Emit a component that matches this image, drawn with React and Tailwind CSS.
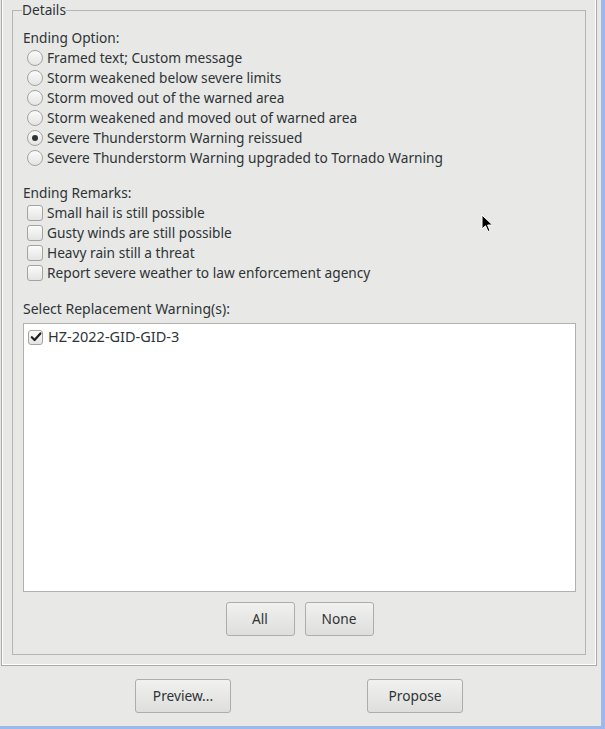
import React from 'react';

const endingOptions = [
  'Framed text; Custom message',
  'Storm weakened below severe limits',
  'Storm moved out of the warned area',
  'Storm weakened and moved out of warned area',
  'Severe Thunderstorm Warning reissued',
  'Severe Thunderstorm Warning upgraded to Tornado Warning',
];

const remarks = [
  'Small hail is still possible',
  'Gusty winds are still possible',
  'Heavy rain still a threat',
  'Report severe weather to law enforcement agency',
];

function Radio({ checked }) {
  return (
    <span className="w-[16px] h-[16px] rounded-full border border-[#a3a3a1] bg-gradient-to-b from-[#fbfbfa] to-[#e4e4e2] flex items-center justify-center shrink-0">
      {checked && <span className="w-[6px] h-[6px] rounded-full bg-[#2e3436]" />}
    </span>
  );
}

function Check({ checked, size = 'w-[16px] h-[16px]' }) {
  return (
    <span className={`${size} rounded-[3px] border border-[#a3a3a1] bg-gradient-to-b from-[#fbfbfa] to-[#e4e4e2] flex items-center justify-center shrink-0`}>
      {checked && (
        <svg width="12" height="12" viewBox="0 0 12 12">
          <path d="M1.8 6.2 L4.6 9 L10.4 2.4" fill="none" stroke="#1c1f20" strokeWidth="2.2" strokeLinecap="round" strokeLinejoin="round" />
        </svg>
      )}
    </span>
  );
}

function Button({ children, className }) {
  return (
    <button className={`h-[34px] rounded-[3px] border border-[#adadab] bg-gradient-to-b from-[#f1f1f0] to-[#dededc] text-[#2e3436] text-[13.7px] ${className}`}>
      {children}
    </button>
  );
}

export default function App() {
  return (
    <div
      className="w-[605px] h-[729px] bg-[#e8e8e7] flex flex-col overflow-hidden relative text-[#2e3436] text-[13.7px]"
      style={{ fontFamily: '"Noto Sans", "Open Sans", sans-serif' }}
    >
      <div className="flex h-[726px]">
        <div className="w-[601px] pl-[1px] flex flex-col">
          <div className="w-[596px] h-[666px] border-x border-b border-[#a9a9a7]">
            <div className="h-full border-x border-b border-white px-[9px] pb-[9px]">
              <fieldset className="h-full border border-[#b5b5b3] px-[10px] pr-[9px] m-0 min-w-0">
                <legend className="-ml-[1px] px-0 leading-[20px] bg-[#e8e8e7]">Details</legend>
                <div className="pt-[8px] flex flex-col">
                  <div className="h-[20px] flex items-center">Ending Option:</div>
                  {endingOptions.map((o, i) => (
                    <div key={o} className="h-[20px] flex items-center gap-[4px] pl-[4px]">
                      <Radio checked={i === 4} />
                      <span>{o}</span>
                    </div>
                  ))}
                  <div className="h-[20px] mt-[15px] flex items-center">Ending Remarks:</div>
                  {remarks.map((r) => (
                    <div key={r} className="h-[20px] flex items-center gap-[4px] pl-[4px]">
                      <Check />
                      <span>{r}</span>
                    </div>
                  ))}
                  <div className="h-[20px] mt-[15px] flex items-center text-[14px]">Select Replacement Warning(s):</div>
                  <div className="mt-[5px] h-[269px] bg-white border border-[#b0b0ae] px-[4px] pt-[3px]">
                    <div className="h-[20px] flex items-center gap-[5px] text-[14.5px]">
                      <Check checked size="w-[15px] h-[15px]" />
                      <span>HZ-2022-GID-GID-3</span>
                    </div>
                  </div>
                  <div className="mt-[10px] flex justify-center gap-[10px]">
                    <Button className="w-[69px]">All</Button>
                    <Button className="w-[69px]">None</Button>
                  </div>
                </div>
              </fieldset>
            </div>
          </div>
          <div className="flex pt-[13px] pl-[134px] gap-[136px]">
            <Button className="w-[96px]">Preview...</Button>
            <Button className="w-[96px]">Propose</Button>
          </div>
        </div>
        <div className="w-[4px] bg-[#9bb9ea]" />
      </div>
      <div className="h-[3px] bg-[#9bb9ea]" />
      <svg className="absolute left-[481px] top-[214px]" width="14" height="20" viewBox="0 0 14 20">
        <path d="M1 1 L1 15 L4.5 11.8 L7 17.5 L9 16.6 L6.6 11 L11.5 11 Z" fill="#000" stroke="#fff" strokeWidth="1" />
      </svg>
    </div>
  );
}
